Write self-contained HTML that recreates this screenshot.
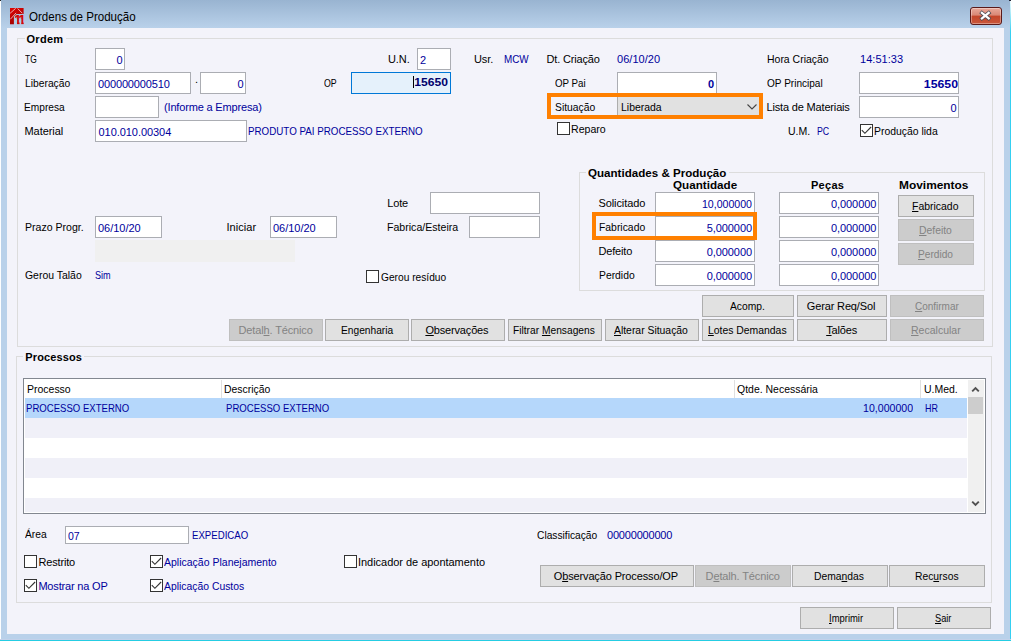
<!DOCTYPE html>
<html><head><meta charset="utf-8"><title>Ordens de Produção</title>
<style>
html,body{margin:0;padding:0}
body{width:1011px;height:641px;position:relative;overflow:hidden;background:#b9d1ea;font-family:"Liberation Sans",sans-serif;font-size:11px;line-height:13px;color:#000}
.t{position:absolute;white-space:nowrap;line-height:13px;transform-origin:0 0}
.t u{text-decoration:underline;text-underline-offset:1px}
.in{position:absolute;border:1px solid #abadb3;background:#fff}
.bt{position:absolute;border:1px solid #adadad;background:#e1e1e1}
.bt.dis{border-color:#bfbfbf;background:#cccccc}
.ck{position:absolute;width:11px;height:11px;border:1px solid #333;background:#fff}
.gb{position:absolute;border:1px solid #dcdcdc}

</style></head><body>
<div style="position:absolute;left:0px;top:0px;width:1011px;height:28px;background:linear-gradient(#99b4d1,#b9d1ea)"></div>
<div style="position:absolute;left:0px;top:0px;width:1px;height:641px;background:#fdfeff"></div>
<div style="position:absolute;left:1010px;top:0px;width:1px;height:641px;background:linear-gradient(#f0fbfe 0px,#bfeffa 10px,#34d0f2 32px,#34d0f2 100%)"></div>
<div style="position:absolute;left:0px;top:639px;width:1011px;height:1px;background:#c3d1ea"></div>
<div style="position:absolute;left:0px;top:640px;width:1011px;height:1px;background:#25cde3"></div>
<div style="position:absolute;left:0px;top:0px;width:1px;height:1px;background:#222"></div>
<div style="position:absolute;left:1009px;top:0px;width:2px;height:1px;background:#223"></div>
<div style="position:absolute;left:7px;top:28px;width:997px;height:606px;background:#f3f3fa"></div>
<svg style="position:absolute;left:10px;top:7.75px" width="14" height="17" viewBox="0 0 14 17">
<defs><linearGradient id="rg" x1="0" y1="0" x2="0.4" y2="1"><stop offset="0" stop-color="#e00404"/><stop offset="1" stop-color="#a00202"/></linearGradient>
<clipPath id="c11"><path d="M4.8 7H9.3V16.4H6.95V10.9H4.8ZM9.4 7H13.65V16.4H11.25V10.9H9.4Z"/></clipPath></defs>
<path d="M0 0H13.6V5.9H6.5L3.9 8.6V16.2H0Z" fill="url(#rg)"/>
<path d="M0.1 5.3L5.7 0.3M0.3 11.3L6.1 4.9M7.6 0.5L12.4 5.3" stroke="#f2cccc" stroke-width="0.85" fill="none"/>
<g clip-path="url(#c11)"><text x="4.3" y="16.2" style="font-family:'Liberation Sans',sans-serif;font-weight:bold;font-size:12.75px;font-kerning:none;letter-spacing:-2.79px" fill="#d40606" stroke="#d40606" stroke-width="0.35">11</text></g>
</svg>
<div style="position:absolute;left:970px;top:7px;width:30px;height:16px;border:1px solid #5a1a1a;border-radius:3px;background:linear-gradient(#e9a99b 0%,#d98775 45%,#c4452a 50%,#c9573c 100%);box-shadow:inset 0 0 0 1px rgba(255,255,255,.35)"></div>
<svg style="position:absolute;left:978px;top:9px" width="15" height="13" viewBox="0 0 15 13"><path d="M3.9 3.9L10.7 9.4M10.7 3.9L3.9 9.4" stroke="#4d4d55" stroke-width="3.8" stroke-linecap="square"/><path d="M3.9 3.9L10.7 9.4M10.7 3.9L3.9 9.4" stroke="#fff" stroke-width="2.2" stroke-linecap="square"/></svg>
<div class="gb" style="left:17px;top:38px;width:974px;height:307px"></div>
<div style="position:absolute;left:24.5px;top:38px;width:41.2px;height:1px;background:#f3f3fa"></div>
<div class="gb" style="left:16px;top:356px;width:974px;height:245px"></div>
<div style="position:absolute;left:23.3px;top:356px;width:61px;height:1px;background:#f3f3fa"></div>
<div class="gb" style="left:579px;top:172px;width:404px;height:117px"></div>
<div style="position:absolute;left:586.3px;top:172px;width:142.7px;height:1px;background:#f3f3fa"></div>
<div class="in" style="left:95px;top:48px;width:28px;height:20px;background:#fff;border-color:#abadb3"></div>
<div class="in" style="left:417px;top:48px;width:32px;height:20px;background:#fff;border-color:#abadb3"></div>
<div class="in" style="left:95px;top:72px;width:94px;height:20px;background:#fff;border-color:#abadb3"></div>
<div class="in" style="left:200px;top:72px;width:44px;height:20px;background:#fff;border-color:#abadb3"></div>
<div class="in" style="left:351px;top:72px;width:98px;height:20px;background:#e5f1fb;border-color:#0078d7"></div>
<div style="position:absolute;left:413px;top:76px;width:1px;height:12px;background:#000"></div>
<div class="in" style="left:617px;top:72px;width:98px;height:20px;background:#fff;border-color:#abadb3"></div>
<div class="in" style="left:859px;top:72px;width:98px;height:20px;background:#fff;border-color:#abadb3"></div>
<div class="in" style="left:95px;top:96px;width:62px;height:20px;background:#fff;border-color:#abadb3"></div>
<div style="position:absolute;left:617px;top:96px;width:144px;height:22px;background:#e1e1e1;border:1px solid #adadad;box-sizing:border-box"></div>
<svg style="position:absolute;left:746px;top:102px" width="12" height="9" viewBox="0 0 12 9"><path d="M1.5 2.5L6 7L10.5 2.5" fill="none" stroke="#444" stroke-width="1.1"/></svg>
<div style="position:absolute;left:547px;top:93px;width:216px;height:26px;border:4px solid #ff8000;box-sizing:border-box"></div>
<div class="in" style="left:859px;top:96px;width:98px;height:20px;background:#fff;border-color:#abadb3"></div>
<div class="in" style="left:95px;top:120px;width:150px;height:20px;background:#fff;border-color:#abadb3"></div>
<div class="ck" style="left:557px;top:122px"></div>
<div class="ck" style="left:860px;top:124px"><svg width="13" height="13" viewBox="0 0 13 13" style="position:absolute;left:-1px;top:-1px"><path d="M1.8 6.2 L4.9 9.3 L11.1 3.0" fill="none" stroke="#333" stroke-width="1.15"/></svg></div>
<div class="in" style="left:430px;top:192px;width:108px;height:20px;background:#fff;border-color:#abadb3"></div>
<div class="in" style="left:95px;top:216px;width:65px;height:20px;background:#fff;border-color:#abadb3"></div>
<div class="in" style="left:270px;top:216px;width:65px;height:20px;background:#fff;border-color:#abadb3"></div>
<div class="in" style="left:469px;top:216px;width:69px;height:20px;background:#fff;border-color:#abadb3"></div>
<div style="position:absolute;left:95px;top:240px;width:200px;height:22px;background:#f0f0f0"></div>
<div class="ck" style="left:366px;top:270px"></div>
<div class="in" style="left:655px;top:192px;width:98px;height:20px;background:#fff;border-color:#abadb3"></div>
<div class="in" style="left:779px;top:192px;width:98px;height:20px;background:#fff;border-color:#abadb3"></div>
<div class="in" style="left:655px;top:216px;width:98px;height:20px;background:#fff;border-color:#abadb3"></div>
<div class="in" style="left:779px;top:216px;width:98px;height:20px;background:#fff;border-color:#abadb3"></div>
<div class="in" style="left:655px;top:240px;width:98px;height:20px;background:#fff;border-color:#abadb3"></div>
<div class="in" style="left:779px;top:240px;width:98px;height:20px;background:#fff;border-color:#abadb3"></div>
<div class="in" style="left:655px;top:264px;width:98px;height:20px;background:#fff;border-color:#abadb3"></div>
<div class="in" style="left:779px;top:264px;width:98px;height:20px;background:#fff;border-color:#abadb3"></div>
<div style="position:absolute;left:592px;top:212px;width:165px;height:28px;border:4px solid #ff8000;box-sizing:border-box"></div>
<div class="bt" style="left:898px;top:195px;width:74px;height:20px"></div>
<div class="bt dis" style="left:898px;top:219px;width:74px;height:20px"></div>
<div class="bt dis" style="left:898px;top:243px;width:74px;height:20px"></div>
<div class="bt" style="left:702px;top:295px;width:90px;height:20px"></div>
<div class="bt" style="left:797px;top:295px;width:88px;height:20px"></div>
<div class="bt dis" style="left:890px;top:295px;width:92px;height:20px"></div>
<div class="bt dis" style="left:229px;top:319px;width:92px;height:20px"></div>
<div class="bt" style="left:325px;top:319px;width:82px;height:20px"></div>
<div class="bt" style="left:411px;top:319px;width:92px;height:20px"></div>
<div class="bt" style="left:508px;top:319px;width:92px;height:20px"></div>
<div class="bt" style="left:605px;top:319px;width:92px;height:20px"></div>
<div class="bt" style="left:702px;top:319px;width:90px;height:20px"></div>
<div class="bt" style="left:797px;top:319px;width:88px;height:20px"></div>
<div class="bt dis" style="left:890px;top:319px;width:92px;height:20px"></div>
<div style="position:absolute;left:23px;top:378px;width:963px;height:136px;background:#fff;border:1px solid #828790;box-sizing:border-box"></div>
<div style="position:absolute;left:25px;top:398px;width:942px;height:20px;background:#b5d7fb"></div>
<div style="position:absolute;left:25px;top:418px;width:942px;height:20px;background:#f0f0f8"></div>
<div style="position:absolute;left:25px;top:458px;width:942px;height:20px;background:#f0f0f8"></div>
<div style="position:absolute;left:25px;top:498px;width:942px;height:14px;background:#f0f0f8"></div>
<div style="position:absolute;left:221px;top:380px;width:1px;height:18px;background:#e0e0e0"></div>
<div style="position:absolute;left:734px;top:380px;width:1px;height:18px;background:#e0e0e0"></div>
<div style="position:absolute;left:920px;top:380px;width:1px;height:18px;background:#e0e0e0"></div>
<div style="position:absolute;left:968px;top:380px;width:16px;height:132px;background:#f0f0f0"></div>
<div style="position:absolute;left:968px;top:397px;width:15px;height:17px;background:#cdcdcd"></div>
<svg style="position:absolute;left:970px;top:384px" width="11" height="10" viewBox="0 0 11 10"><path d="M2.2 7.4L5.5 4.1L8.8 7.4" fill="none" stroke="#505050" stroke-width="1.9"/></svg>
<svg style="position:absolute;left:970px;top:498px" width="11" height="10" viewBox="0 0 11 10"><path d="M2.2 3.6L5.5 6.9L8.8 3.6" fill="none" stroke="#505050" stroke-width="1.9"/></svg>
<div class="in" style="left:65px;top:526px;width:122px;height:16px;background:#fff;border-color:#abadb3"></div>
<div class="ck" style="left:24px;top:555px"></div>
<div class="ck" style="left:150px;top:555px"><svg width="13" height="13" viewBox="0 0 13 13" style="position:absolute;left:-1px;top:-1px"><path d="M1.8 6.2 L4.9 9.3 L11.1 3.0" fill="none" stroke="#333" stroke-width="1.15"/></svg></div>
<div class="ck" style="left:344px;top:555px"></div>
<div class="ck" style="left:24px;top:579px"><svg width="13" height="13" viewBox="0 0 13 13" style="position:absolute;left:-1px;top:-1px"><path d="M1.8 6.2 L4.9 9.3 L11.1 3.0" fill="none" stroke="#333" stroke-width="1.15"/></svg></div>
<div class="ck" style="left:150px;top:579px"><svg width="13" height="13" viewBox="0 0 13 13" style="position:absolute;left:-1px;top:-1px"><path d="M1.8 6.2 L4.9 9.3 L11.1 3.0" fill="none" stroke="#333" stroke-width="1.15"/></svg></div>
<div class="bt" style="left:540px;top:565px;width:152px;height:20px"></div>
<div class="bt dis" style="left:695px;top:565px;width:94px;height:20px"></div>
<div class="bt" style="left:792px;top:565px;width:94px;height:20px"></div>
<div class="bt" style="left:889px;top:565px;width:94px;height:20px"></div>
<div class="bt" style="left:800px;top:607px;width:92px;height:20px"></div>
<div class="bt" style="left:897px;top:607px;width:92px;height:20px"></div>
<span class="t " id="t0" style="top:9px;color:#000;font-size:12px;line-height:16px;transform:scaleX(0.9634);left:29.3px;">Ordens de Produção</span>
<span class="t " id="t1" style="top:33px;color:#000;font-weight:bold;letter-spacing:0.289px;left:26.5px;">Ordem</span>
<span class="t " id="t2" style="top:351px;color:#000;font-weight:bold;letter-spacing:0.116px;left:25.3px;">Processos</span>
<span class="t " id="t3" style="top:167px;color:#000;font-weight:bold;transform:scaleX(1.0531);left:588.3px;">Quantidades &amp; Produção</span>
<span class="t " id="t4" style="top:53px;color:#000;transform:scaleX(0.7656);left:25px;">TG</span>
<span class="t " id="t5" style="top:54px;color:#00009c;left:-277.5px;width:400px;text-align:right;">0</span>
<span class="t " id="t6" style="top:53px;color:#000;letter-spacing:-0.077px;left:388px;">U.N.</span>
<span class="t " id="t7" style="top:54px;color:#00009c;left:420px;">2</span>
<span class="t " id="t8" style="top:53px;color:#000;letter-spacing:-0.092px;left:474px;">Usr.</span>
<span class="t " id="t9" style="top:53px;color:#00009c;transform:scaleX(0.8982);left:504px;">MCW</span>
<span class="t " id="t10" style="top:53px;color:#000;letter-spacing:-0.166px;left:546.5px;">Dt. Criação</span>
<span class="t " id="t11" style="top:53px;color:#00009c;letter-spacing:0.048px;left:617px;">06/10/20</span>
<span class="t " id="t12" style="top:53px;color:#000;transform:scaleX(0.9520);left:766.5px;">Hora Criação</span>
<span class="t " id="t13" style="top:53px;color:#00009c;letter-spacing:0.048px;left:860px;">14:51:33</span>
<span class="t " id="t14" style="top:77px;color:#000;transform:scaleX(0.9353);left:24.5px;">Liberação</span>
<span class="t " id="t15" style="top:78px;color:#00009c;letter-spacing:-0.143px;left:98px;">000000000510</span>
<span class="t " id="t16" style="top:73px;color:#000;left:195px;">.</span>
<span class="t " id="t17" style="top:78px;color:#00009c;left:-156.5px;width:400px;text-align:right;">0</span>
<span class="t " id="t18" style="top:77px;color:#000;transform:scaleX(0.7984);left:324px;">OP</span>
<span class="t " id="t19" style="top:76px;color:#00006c;font-weight:bold;transform:scaleX(1.1015);transform-origin:100% 0;left:48px;width:400px;text-align:right;">15650</span>
<span class="t " id="t20" style="top:77px;color:#000;transform:scaleX(0.8858);left:555px;">OP Pai</span>
<span class="t " id="t21" style="top:78px;color:#00009c;font-weight:bold;left:314px;width:400px;text-align:right;">0</span>
<span class="t " id="t22" style="top:77px;color:#000;transform:scaleX(0.9141);left:766.5px;">OP Principal</span>
<span class="t " id="t23" style="top:78px;color:#00009c;font-weight:bold;transform:scaleX(1.1179);transform-origin:100% 0;left:558px;width:400px;text-align:right;">15650</span>
<span class="t " id="t24" style="top:101px;color:#000;transform:scaleX(0.9243);left:23.9px;">Empresa</span>
<span class="t " id="t25" style="top:101px;color:#00009c;letter-spacing:-0.167px;left:164px;">(Informe a Empresa)</span>
<span class="t " id="t26" style="top:101px;color:#000;transform:scaleX(0.9390);left:554.5px;">Situação</span>
<span class="t " id="t27" style="top:101px;color:#000;transform:scaleX(0.9503);left:620.5px;">Liberada</span>
<span class="t " id="t28" style="top:101px;color:#000;letter-spacing:-0.167px;left:766.5px;">Lista de Materiais</span>
<span class="t " id="t29" style="top:102px;color:#00009c;left:556.5px;width:400px;text-align:right;">0</span>
<span class="t " id="t30" style="top:125px;color:#000;letter-spacing:-0.053px;left:24.5px;">Material</span>
<span class="t " id="t31" style="top:126px;color:#00009c;letter-spacing:-0.055px;left:98.5px;">010.010.00304</span>
<span class="t " id="t32" style="top:125px;color:#00009c;transform:scaleX(0.8895);left:247.6px;">PRODUTO PAI PROCESSO EXTERNO</span>
<span class="t " id="t33" style="top:123px;color:#000;transform:scaleX(0.9618);left:571px;">Reparo</span>
<span class="t " id="t34" style="top:125px;color:#000;transform:scaleX(0.9555);left:787.5px;">U.M.</span>
<span class="t " id="t35" style="top:125px;color:#00009c;transform:scaleX(0.7984);left:817px;">PC</span>
<span class="t " id="t36" style="top:125px;color:#000;transform:scaleX(0.9468);left:874px;">Produção lida</span>
<span class="t " id="t37" style="top:197px;color:#000;letter-spacing:-0.178px;left:387.3px;">Lote</span>
<span class="t " id="t38" style="top:221px;color:#000;transform:scaleX(0.9601);left:24.5px;">Prazo Progr.</span>
<span class="t " id="t39" style="top:222px;color:#00009c;letter-spacing:-0.016px;left:98px;">06/10/20</span>
<span class="t " id="t40" style="top:221px;color:#000;letter-spacing:0.051px;left:226.5px;">Iniciar</span>
<span class="t " id="t41" style="top:222px;color:#00009c;letter-spacing:-0.016px;left:273px;">06/10/20</span>
<span class="t " id="t42" style="top:221px;color:#000;transform:scaleX(0.9624);left:387.3px;">Fabrica/Esteira</span>
<span class="t " id="t43" style="top:269px;color:#000;transform:scaleX(0.9492);left:24.5px;">Gerou Talão</span>
<span class="t " id="t44" style="top:269px;color:#00009c;transform:scaleX(0.8284);left:95px;">Sim</span>
<span class="t " id="t45" style="top:271px;color:#000;transform:scaleX(0.9271);left:381px;">Gerou resíduo</span>
<span class="t " id="t46" style="top:179px;color:#000;font-weight:bold;transform:scaleX(1.0609);left:673px;">Quantidade</span>
<span class="t " id="t47" style="top:179px;color:#000;font-weight:bold;letter-spacing:0.276px;left:811px;">Peças</span>
<span class="t " id="t48" style="top:179px;color:#000;font-weight:bold;transform:scaleX(1.0828);left:899.2px;">Movimentos</span>
<span class="t " id="t49" style="top:197px;color:#000;letter-spacing:-0.100px;left:598.5px;">Solicitado</span>
<span class="t " id="t50" style="top:198px;color:#00009c;transform:scaleX(0.9635);transform-origin:100% 0;left:352px;width:400px;text-align:right;">10,000000</span>
<span class="t " id="t51" style="top:198px;color:#00009c;letter-spacing:-0.049px;left:476.4px;width:400px;text-align:right;">0,000000</span>
<span class="t " id="t52" style="top:221px;color:#000;transform:scaleX(0.9444);left:598.5px;">Fabricado</span>
<span class="t " id="t53" style="top:222px;color:#00009c;letter-spacing:-0.074px;left:352px;width:400px;text-align:right;">5,000000</span>
<span class="t " id="t54" style="top:222px;color:#00009c;letter-spacing:-0.049px;left:476.4px;width:400px;text-align:right;">0,000000</span>
<span class="t " id="t55" style="top:245px;color:#000;letter-spacing:-0.166px;left:598.5px;">Defeito</span>
<span class="t " id="t56" style="top:246px;color:#00009c;letter-spacing:-0.074px;left:352px;width:400px;text-align:right;">0,000000</span>
<span class="t " id="t57" style="top:246px;color:#00009c;letter-spacing:-0.049px;left:476.4px;width:400px;text-align:right;">0,000000</span>
<span class="t " id="t58" style="top:269px;color:#000;transform:scaleX(0.9414);left:598.5px;">Perdido</span>
<span class="t " id="t59" style="top:270px;color:#00009c;letter-spacing:-0.074px;left:352px;width:400px;text-align:right;">0,000000</span>
<span class="t " id="t60" style="top:270px;color:#00009c;letter-spacing:-0.049px;left:476.4px;width:400px;text-align:right;">0,000000</span>
<span class="t " id="t61" style="top:200px;color:#000;transform:scaleX(0.9502);left:911.9px;"><u>F</u>abricado</span>
<span class="t " id="t62" style="top:224px;color:#838383;transform:scaleX(0.9434);left:919.1px;"><u>D</u>efeito</span>
<span class="t " id="t63" style="top:248px;color:#838383;transform:scaleX(0.9230);left:918.1px;"><u>P</u>erdido</span>
<span class="t " id="t64" style="top:300px;color:#000;transform:scaleX(0.9357);left:730px;">Acomp.</span>
<span class="t " id="t65" style="top:300px;color:#000;letter-spacing:-0.147px;left:806.8px;">Gerar Req/Sol</span>
<span class="t " id="t66" style="top:300px;color:#838383;transform:scaleX(0.9069);left:914.6px;"><u>C</u>onfirmar</span>
<span class="t " id="t67" style="top:324px;color:#838383;letter-spacing:-0.136px;left:238.5px;">Detal<u>h</u>. Técnico</span>
<span class="t " id="t68" style="top:324px;color:#000;transform:scaleX(0.9272);left:340.7px;">En<u>g</u>enharia</span>
<span class="t " id="t69" style="top:324px;color:#000;letter-spacing:-0.166px;left:425.4px;"><u>O</u>bservações</span>
<span class="t " id="t70" style="top:324px;color:#000;transform:scaleX(0.9289);left:513.2px;">Filtrar <u>M</u>ensagens</span>
<span class="t " id="t71" style="top:324px;color:#000;transform:scaleX(0.9440);left:613.8px;"><u>A</u>lterar Situação</span>
<span class="t " id="t72" style="top:324px;color:#000;transform:scaleX(0.9450);left:708.4px;"><u>L</u>otes Demandas</span>
<span class="t " id="t73" style="top:324px;color:#000;letter-spacing:-0.136px;left:826.2px;"><u>T</u>alões</span>
<span class="t " id="t74" style="top:324px;color:#838383;transform:scaleX(0.9561);left:911.3px;"><u>R</u>ecalcular</span>
<span class="t " id="t75" style="top:383px;color:#000;transform:scaleX(0.9529);left:27px;">Processo</span>
<span class="t " id="t76" style="top:383px;color:#000;transform:scaleX(0.9467);left:224.4px;">Descrição</span>
<span class="t " id="t77" style="top:383px;color:#000;transform:scaleX(0.9519);left:737px;">Qtde. Necessária</span>
<span class="t " id="t78" style="top:383px;color:#000;transform:scaleX(0.9501);left:923.5px;">U.Med.</span>
<span class="t " id="t79" style="top:402px;color:#00009c;transform:scaleX(0.8703);left:26px;">PROCESSO EXTERNO</span>
<span class="t " id="t80" style="top:402px;color:#00009c;transform:scaleX(0.8703);left:225.5px;">PROCESSO EXTERNO</span>
<span class="t " id="t81" style="top:402px;color:#00009c;transform:scaleX(0.9596);transform-origin:100% 0;left:513px;width:400px;text-align:right;">10,000000</span>
<span class="t " id="t82" style="top:402px;color:#00009c;transform:scaleX(0.8118);left:924.5px;">HR</span>
<span class="t " id="t83" style="top:528px;color:#000;transform:scaleX(0.9333);left:24.5px;">Área</span>
<span class="t " id="t84" style="top:530px;color:#00009c;transform:scaleX(0.9551);left:67.6px;">07</span>
<span class="t " id="t85" style="top:529px;color:#00009c;transform:scaleX(0.8756);left:192px;">EXPEDICAO</span>
<span class="t " id="t86" style="top:529px;color:#000;transform:scaleX(0.9288);left:537px;">Classificação</span>
<span class="t " id="t87" style="top:529px;color:#00009c;letter-spacing:-0.191px;left:607px;">00000000000</span>
<span class="t " id="t88" style="top:556px;color:#000;letter-spacing:-0.151px;left:38.4px;">Restrito</span>
<span class="t " id="t89" style="top:556px;color:#00009c;transform:scaleX(0.9548);left:164px;">Aplicação Planejamento</span>
<span class="t " id="t90" style="top:556px;color:#000;letter-spacing:-0.034px;left:358px;">Indicador de apontamento</span>
<span class="t " id="t91" style="top:580px;color:#00009c;letter-spacing:-0.179px;left:38.4px;">Mostrar na OP</span>
<span class="t " id="t92" style="top:580px;color:#00009c;transform:scaleX(0.9435);left:164px;">Aplicação Custos</span>
<span class="t " id="t93" style="top:570px;color:#000;letter-spacing:-0.132px;left:553.7px;">O<u>b</u>servação Processo/OP</span>
<span class="t " id="t94" style="top:570px;color:#838383;letter-spacing:-0.136px;left:705.6px;">D<u>e</u>talh. Técnico</span>
<span class="t " id="t95" style="top:570px;color:#000;transform:scaleX(0.9376);left:814.3px;">Dema<u>n</u>das</span>
<span class="t " id="t96" style="top:570px;color:#000;transform:scaleX(0.9383);left:914.5px;">Rec<u>u</u>rsos</span>
<span class="t " id="t97" style="top:612px;color:#000;transform:scaleX(0.8582);left:829.4px;"><u>I</u>mprimir</span>
<span class="t " id="t98" style="top:612px;color:#000;transform:scaleX(0.8377);left:935.4px;"><u>S</u>air</span>
</body></html>
